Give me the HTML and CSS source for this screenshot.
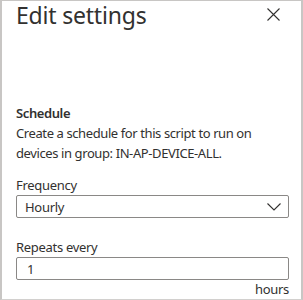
FILE: index.html
```html
<!DOCTYPE html>
<html lang="en">
<head>
    <meta charset="UTF-8">
    <meta name="viewport" content="width=device-width, initial-scale=1.0">
    <title>Edit settings</title>
    <link rel="stylesheet" href="styles.css">
</head>
<body>
    <div class="panel">
        <div class="kopf">
            <h1>Edit settings</h1>
            <button class="schliessen" aria-label="Close">
                <svg width="13" height="13" viewBox="0 0 13 13"><path d="M0.5 0.5 L12.5 12.5 M12.5 0.5 L0.5 12.5" stroke="#323130" stroke-width="1.1" fill="none"/></svg>
            </button>
        </div>
        <div class="abschnitt">
            <h2>Schedule</h2>
            <p>Create a schedule for this script to run on devices in group: IN-AP-DEVICE-ALL.</p>
        </div>
        <div class="feld">
            <label>Frequency</label>
            <div class="auswahl">
                <span>Hourly</span>
                <svg width="14" height="8" viewBox="0 0 14 8"><path d="M0.5 0.5 L7 7 L13.5 0.5" stroke="#323130" stroke-width="1.1" fill="none"/></svg>
            </div>
        </div>
        <div class="feld">
            <label>Repeats every</label>
            <div class="eingabe">1</div>
            <div class="einheit">hours</div>
        </div>
    </div>
</body>
</html>
```

FILE: styles.css
```css
body {
    margin: 0;
    padding: 0;
    background-color: white;
    font-family: "Noto Sans", "Open Sans", sans-serif;
    color: #323130;
}

.panel {
    box-sizing: border-box;
    width: 303px;
    height: 300px;
    border: 2px solid #c8c6c4;
    border-top-width: 1px;
    border-bottom: 1px solid #d2d0ce;
    padding: 0 12px 0 14px;
    overflow: hidden;
}

.kopf {
    display: flex;
    justify-content: space-between;
    align-items: flex-start;
}

h1 {
    margin: 0;
    font-size: 23px;
    font-weight: 400;
    line-height: 28px;
    letter-spacing: -0.2px;
}

.schliessen {
    background: none;
    border: none;
    padding: 0;
    margin: 7px 9px 0 0;
    width: 13px;
    height: 13px;
    display: flex;
}

.abschnitt {
    margin-top: 75px;
    letter-spacing: -0.4px;
}

h2 {
    margin: 0;
    font-size: 13px;
    font-weight: 600;
    line-height: 19px;
}

p {
    margin: 0;
    font-size: 13px;
    line-height: 20px;
}

.feld {
    margin-top: 13px;
    font-size: 13px;
    letter-spacing: -0.3px;
}

.feld + .feld {
    margin-top: 20px;
}

label {
    display: block;
    line-height: 19px;
    margin-bottom: 0;
}

.auswahl, .eingabe {
    box-sizing: border-box;
    height: 23px;
    border: 1px solid #8a8886;
    border-radius: 2px;
    display: flex;
    align-items: center;
    justify-content: space-between;
    padding: 0 7px 0 8px;
    line-height: 20px;
}

.auswahl svg {
    margin-top: 1px;
}

.eingabe {
    padding-left: 10px;
}

.einheit {
    text-align: right;
    line-height: 20px;
    margin-top: -1px;
}
```
